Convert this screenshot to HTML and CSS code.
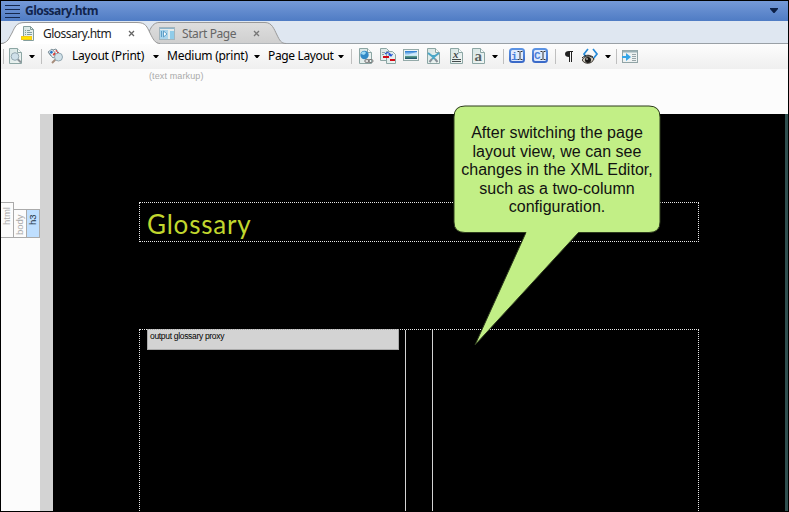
FILE: index.html
```html
<!DOCTYPE html>
<html lang="en">
<head>
<meta charset="utf-8">
<title>Glossary.htm</title>
<link rel="stylesheet" href="styles.css">
</head>
<body>
<svg class="defs" width="0" height="0">
  <defs>
    <linearGradient id="page" x2="1" y2="1"><stop stop-color="#d5e5e4"/><stop offset="1" stop-color="#f2f6f4"/></linearGradient>
    <linearGradient id="blue" x2="0" y2="1"><stop stop-color="#5b93e4"/><stop offset="1" stop-color="#3a69c8"/></linearGradient>
    <linearGradient id="idle" x2="0" y2="1"><stop stop-color="#dedede"/><stop offset="1" stop-color="#cfcfcf"/></linearGradient>
    <linearGradient id="sky" x2="0" y2="1"><stop stop-color="#2276d0"/><stop offset=".55" stop-color="#d0eeff"/><stop offset=".68" stop-color="#5a9a88"/><stop offset="1" stop-color="#174c69"/></linearGradient>
    <symbol id="sheet" viewBox="0 0 13 16"><path d="M.5.5h8l4 4v11H.5z" fill="url(#page)" stroke="#8ca6a4"/><path d="M8.5.5v4h4" fill="#f7fbfa" stroke="#8ca6a4"/></symbol>
  </defs>
</svg>
<div class="window">
  <header class="titlebar">
    <svg width="15" height="13"><path d="M0 .5h15M0 4.5h15M0 8.5h15M0 12.5h15" stroke="#15284d"/></svg>
    <span class="title">Glossary.htm</span>
    <svg class="title-arrow" width="8" height="5"><path d="M0 0h8v1L4.5 5h-1L0 1z" fill="#0c1f45"/></svg>
  </header>
  <nav class="tabs">
    <svg class="tab-shapes" width="787" height="23">
      <path d="M0 22.5h787" stroke="#99a0a6"/>
      <path d="M157 22.5C152 21 148 14 148.500 10C150 6 153 1.500 158 1.500H264C271 1.500 273 8 276 14C278.500 19 280 22.500 285 22.500" fill="url(#idle)" stroke="#999"/>
      <path d="M0 23C7 22 8 17 11 12C14 6 15 1.500 24 1.500H136C145 1.500 146 6 149 12C152 18 154 22 159 23z" fill="#fff"/>
      <path d="M0 22.500C7 22 8 17 11 12C14 6 15 1.500 24 1.500H136C145 1.500 146 6 149 12C152 18 154 22.500 159 22.500" fill="none" stroke="#999"/>
    </svg>
    <div class="tab tab-active">
      <svg width="14" height="16"><path d="M2.500.500h7l3 3v11h-10z" fill="url(#page)" stroke="#849e9c"/><path d="M9.500.500v3h3M4 4.500h1M6 4.500h3M4 6.500h1M6 6.500h5M4 8.500h1M6 8.500h5" fill="none" stroke="#849e9c"/><rect x=".5" y="10.500" width="10" height="3" fill="#ffe400" stroke="#f3c81a"/></svg>
      <span class="tab-name name-active">Glossary.htm</span>
      <svg class="close" width="7" height="7"><path d="M1 1l5 5M6 1L1 6" stroke="#666" stroke-width="1.300"/></svg>
    </div>
    <div class="tab tab-idle">
      <svg width="17" height="13"><rect x=".5" y=".5" width="15" height="12" fill="#e3ebec" stroke="#a3b5bd"/><path d="M1 1.500h14" stroke="#8cb5cc"/><rect x="1" y="3" width="8" height="9" fill="#a9d4ec"/><path d="M2.500 4v6M4.500 4v6L8 7z" fill="#fff" stroke="#5d9fc9"/><rect x="11" y="4" width="4" height="8" fill="#8fcce9"/></svg>
      <span class="tab-name name-idle">Start Page</span>
      <svg class="close" width="7" height="7"><path d="M1 1l5 5M6 1L1 6" stroke="#777" stroke-width="1.300"/></svg>
    </div>
  </nav>
  <div class="toolbar">
    <i class="sep first"></i>
    <svg class="preview" width="14" height="16"><use href="#sheet" width="13" height="16"/><path d="M8.500 11l3.500 3.500" stroke="#8b9298" stroke-width="2"/><circle cx="6" cy="8.500" r="3.800" fill="#cfe0e9" stroke="#94a8b1"/></svg>
    <i class="arrow a1"></i>
    <i class="sep s1"></i>
    <svg class="style-icon" width="17" height="16"><path d="M1 4l4-3 5 6-4 3z" fill="#e9f0f2" stroke="#82949d"/><path d="M6 2l3-1 2 3M2 5l2 3" fill="none" stroke="#7d8f98"/><path d="M2.500 4l2.500-1.500 1 2-2 1.500z" fill="#216fc4"/><path d="M5.500 6l2.500-1.500 1 2.500-2 1z" fill="#e13b33"/><path d="M8 3l2-1v2zM10 4h2v2h-2z" fill="#d33"/><path d="M8.500 11.500l-3.500 3.500" stroke="#a68d7c" stroke-width="2"/><circle cx="11.500" cy="9" r="4" fill="#d1e1e9" stroke="#91a6b1"/></svg>
    <span class="menu layout">Layout (Print)</span><i class="arrow a2"></i>
    <span class="menu medium">Medium (print)</span><i class="arrow a3"></i>
    <span class="menu pagelayout">Page Layout</span><i class="arrow a4"></i>
    <i class="sep s2"></i>
    <svg class="link" width="15" height="16"><use href="#sheet" width="13" height="16"/><circle cx="5.500" cy="7" r="4.200" fill="#3189c6"/><path d="M2 6c1-3 4-3 5-1L5 7z" fill="#9ddaf5"/><rect x="5.800" y="11.500" width="4.500" height="3" rx="1.500" fill="#ddd" stroke="#777"/><rect x="9.500" y="11.500" width="4.500" height="3" rx="1.500" fill="none" stroke="#777"/></svg>
    <svg class="xref" width="16" height="16"><path d="M.5.500h6l3 3v9h-9z" fill="url(#page)" stroke="#8ca6a4"/><path d="M6.500 3.500h6l3 3v9h-9z" fill="url(#page)" stroke="#8ca6a4"/><path d="M2 4.500h3M2 6.500h2" stroke="#8ca6a4"/><path d="M5 6c2-2 5-2 6 2M8.500 6.500L11 8l1.500-2" fill="none" stroke="#2352d4" stroke-width="1.200"/><path d="M3 9h6M10 12h5" stroke="#d20b16" stroke-width="2"/></svg>
    <svg class="image" width="16" height="12"><rect x=".5" y=".5" width="15" height="11" fill="#eef4f4" stroke="#94aaa9"/><rect x="2" y="2" width="12" height="8" fill="url(#sky)"/><path d="M7 5l3-1 4-1v3H6z" fill="#e0f3fb" opacity=".7"/></svg>
    <svg class="cut" width="13" height="16"><use href="#sheet" width="13" height="16"/><path d="M1 5l4 3h3l4-3M5 8l3 3M8 8l-3 3" fill="none" stroke="#4ba6c6" stroke-width="2"/><path d="M2.500 14L5 11M10.500 14L8 11" stroke="#889199" stroke-width="2"/></svg>
    <svg class="var" width="13" height="16"><use href="#sheet" width="13" height="16"/><text x="3" y="10" class="glyph-x">x</text><path d="M2 11.500h9M2 13.500h9" stroke="#444b4b"/></svg>
    <svg class="char" width="13" height="16"><use href="#sheet" width="13" height="16"/><text x="2.500" y="13" class="glyph-a">a</text></svg>
    <i class="arrow a5"></i><i class="sep s3"></i>
    <svg class="index" width="16" height="15"><rect x="1" y="1" width="14" height="13" rx="2.500" fill="#dfeafc" stroke="url(#blue)" stroke-width="2"/><text x="2" y="11.500" class="glyph-i">i</text><path d="M8.500 3.500h2M11.500 3.500h2M11 4v7M8.500 11.500h2M11.500 11.500h2" stroke="#333" fill="none"/></svg>
    <svg class="concept" width="16" height="15"><rect x="1" y="1" width="14" height="13" rx="2.500" fill="#dfeafc" stroke="url(#blue)" stroke-width="2"/><text x="2" y="11" class="glyph-i">C</text><path d="M8.500 3.500h2M11.500 3.500h2M11 4v7M8.500 11.500h2M11.500 11.500h2" stroke="#333" fill="none"/></svg>
    <i class="sep s4"></i>
    <svg class="pilcrow" width="8" height="11"><path d="M8 0v1H7v10H6V1H5v10H4V6C1.500 6 0 5 0 3S1.500 0 4 0z" fill="#222"/></svg>
    <svg class="eye" width="17" height="17"><path d="M6 1L2 6l2 3M11 1l4 5-4 5" fill="none" stroke="#268ad8" stroke-width="1.700"/><path d="M0 12c3-5 9-5 12-1-2 5-9 6-12 1z" fill="#c9c4b8" stroke="#39342f"/><circle cx="6" cy="12" r="3" fill="#1b1917"/><circle cx="5" cy="11" r=".8" fill="#fff"/><path d="M0 10c4-4 8-3 11-1" fill="none" stroke="#222"/></svg>
    <i class="arrow a6"></i><i class="sep s5"></i>
    <svg class="send" width="16" height="13"><rect x=".5" y=".5" width="15" height="12" fill="#eef2f2" stroke="#91a4a6"/><path d="M1 1.500h14" stroke="#9bb0b5" stroke-width="2"/><path d="M10 4.500h4M10 6.500h4M10 8.500h4M10 10.500h4" stroke="#98a5a8"/><path d="M0 6h4V3l5 4-5 4V8H0z" fill="#35a5e6"/></svg>
  </div>
  <main class="editor">
    <aside class="tags">
      <span class="tag html">html</span><span class="tag body">body</span><span class="tag h3">h3</span>
    </aside>
    <section class="document">
      <div class="markup">(text markup)</div>
      <div class="paper">
        <div class="canvas">
          <h3 class="heading"><span>Glossary</span></h3>
          <div class="columns">
            <div class="column-left"><div class="proxy">output glossary proxy</div></div>
            <div class="gutter"></div>
          </div>
        </div>
      </div>
    </section>
  </main>
</div>
<div class="callout">
  <svg class="bubble" width="210" height="244"><path d="M12 1H196Q207 1 207 12V117Q207 127.500 196 127.500H125.500L22 240L73 127.500H12Q1 127.500 1 117V12Q1 1 12 1z" fill="#c2ef86" stroke="#2c3a1c"/></svg>
  <p class="note"><span>After switching the page</span><span>layout view, we can see</span><span>changes in the XML Editor,</span><span>such as a two-column</span><span>configuration.</span></p>
</div>
</body>
</html>
```
FILE: styles.css
```css
* { box-sizing: border-box; }
body { margin: 0; width: 789px; height: 512px; overflow: hidden; font-family: "Noto Sans", sans-serif; }
svg { display: block; flex: none; }
.defs { position: absolute; }
.window { width: 789px; height: 512px; border: 1px solid #000; background: #fcfcfc; display: flex; flex-direction: column; overflow: hidden; }
.titlebar { height: 20px; flex: none; display: flex; align-items: center; padding: 0 10px 0 4px; background: linear-gradient(#759ad8, #4f7cc4); }
.title { margin-left: 5px; font: bold 12px/18px "Open Sans", sans-serif; letter-spacing: -.55px; color: #10244c; white-space: nowrap; }
.title-arrow { margin-left: auto; margin-bottom: 1px; }
.tabs { height: 23px; flex: none; display: flex; position: relative; background: #dfe7f1; }
.tab-shapes { position: absolute; left: 0; top: 0; }
.tab { position: relative; display: flex; align-items: center; height: 23px; padding-top: 2px; }
.tab-active { width: 148px; padding-left: 20px; }
.tab-idle { padding-left: 10px; }
.tab-name { white-space: nowrap; font: 12px/18px "Noto Sans", sans-serif; }
.name-active { color: #222; margin-left: 8px; width: 69px; letter-spacing: -.5px; }
.name-idle { color: #666; margin-left: 6px; width: 54px; letter-spacing: -.4px; }
.close { margin-left: 17px; }
.tab-active .close { margin-left: 16px; }
.toolbar { height: 25px; flex: none; display: flex; align-items: center; background: linear-gradient(#fdfdfd, #efefef); }
.toolbar > * { flex: none; }
.sep { width: 1px; height: 15px; background: #bfbfbf; }
.first { margin-left: 2px; }
.arrow { width: 6px; height: 3px; background: #000; clip-path: polygon(0 0, 100% 0, 60% 100%, 40% 100%); }
.menu { font: 12px/20px "Noto Sans", sans-serif; color: #000; white-space: nowrap; margin-bottom: 1px; }
.preview { margin-left: 5px; margin-bottom: 1px; }
.a1 { margin-left: 6px; }
.s1 { margin-left: 6px; }
.style-icon { margin-left: 5px; margin-bottom: 1px; }
.layout { margin-left: 8px; width: 73px; letter-spacing: -.25px; }
.a2 { margin-left: 8px; }
.medium { margin-left: 8px; width: 81px; letter-spacing: -.25px; }
.a3 { margin-left: 6px; }
.pagelayout { margin-left: 8px; width: 66px; letter-spacing: -.35px; }
.a4 { margin-left: 4px; }
.s2 { margin-left: 7px; }
.link { margin-left: 7px; }
.xref { margin-left: 6px; }
.link, .xref, .cut, .var, .char { margin-bottom: 1px; }
.image { margin-left: 7px; margin-bottom: 4px; }
.cut { margin-left: 8px; }
.var { margin-left: 10px; }
.char { margin-left: 9px; }
.a5 { margin-left: 7px; }
.s3 { margin-left: 5px; }
.index { margin-left: 5px; }
.concept { margin-left: 7px; }
.index, .concept { margin-bottom: 2px; }
.s4 { margin-left: 7px; }
.pilcrow { margin-left: 9px; }
.eye { margin-left: 9px; }
.a6 { margin-left: 6px; }
.s5 { margin-left: 5px; }
.send { margin-left: 5px; margin-bottom: 1px; }
.glyph-x { font: italic bold 11px "Liberation Serif", serif; fill: #414949; }
.glyph-a { font: bold 15px "Liberation Serif", serif; fill: #596262; }
.glyph-i { font: bold 11px "Liberation Mono", monospace; fill: #4b7fda; }
.editor { flex: 1; display: flex; min-height: 0; }
.tags { width: 39px; height: 169px; display: flex; align-items: flex-end; }
.tag { width: 13px; height: 29px; border: 1px solid #aaa; border-right: 0; writing-mode: vertical-rl; transform: rotate(180deg); font: 9.500px/12px "Liberation Sans", sans-serif; color: #aaa; display: flex; align-items: center; justify-content: flex-end; padding-bottom: 4px; }
.html { height: 36px; }
.h3 { background: #bfdfff; color: #234; }
.document { width: 748px; display: flex; flex-direction: column; }
.markup { height: 45px; flex: none; padding-left: 109px; font: 9px/14px "Liberation Sans", sans-serif; color: #aaa; letter-spacing: .12px; }
.paper { flex: 1; background: #000; border-left: 13px solid #d3d3d3; border-right: 3px solid #2f4f4f; min-height: 0; overflow: hidden; }
.canvas { width: 560px; margin-left: 86px; padding-top: 88px; }
.heading { height: 40px; margin: 0 0 87px; border: 1px dotted #e8e8e8; padding-left: 7px; font: 400 26px/43px Lato, sans-serif; color: #c1d72e; letter-spacing: .8px; }
.columns { height: 190px; border: 1px dotted #e8e8e8; border-bottom: 0; display: flex; padding-left: 7px; }
.column-left { width: 258px; }
.proxy { width: 252px; height: 21px; margin-top: -1px; border: 1px solid #aaa; border-top-style: dotted; background: #d3d3d3; padding-left: 2px; font: 8.500px/13px "Liberation Sans", sans-serif; letter-spacing: -.32px; color: #000; }
.gutter { width: 28px; border: solid #d3d3d3; border-width: 0 1px; }
.callout { position: absolute; left: 453px; top: 105px; width: 210px; height: 244px; }
.bubble { position: absolute; left: 0; top: 0; }
.note { position: relative; margin: 0; padding-top: 19px; width: 208px; text-align: center; font: 16px/18.600px "Liberation Sans", sans-serif; letter-spacing: .04px; color: #111; }
.note span { display: block; white-space: nowrap; }
```
